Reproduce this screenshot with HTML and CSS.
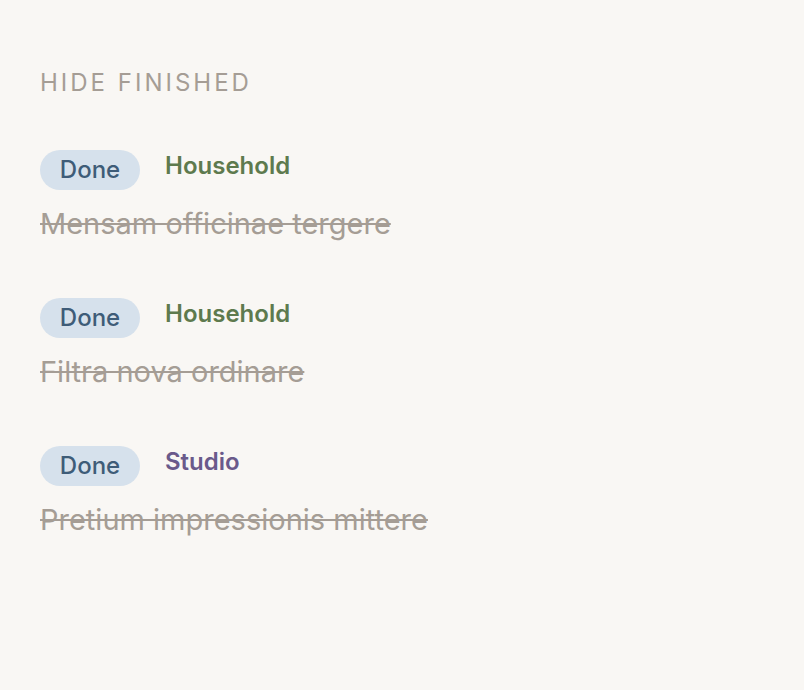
FILE: index.html
```html
<!DOCTYPE html>
<html lang="en">
<head>
    <meta charset="UTF-8">
    <meta name="viewport" content="width=device-width, initial-scale=1.0">
    <title>Finished tasks</title>
    <link rel="stylesheet" href="styles.css">
</head>
<body>
    <div class="list">
        <div class="list-title">Hide finished</div>
        <div class="task">
            <div class="task-meta">
                <span class="status">Done</span>
                <span class="tag household">Household</span>
            </div>
            <div class="task-name">Mensam officinae tergere</div>
        </div>
        <div class="task">
            <div class="task-meta">
                <span class="status">Done</span>
                <span class="tag household">Household</span>
            </div>
            <div class="task-name">Filtra nova ordinare</div>
        </div>
        <div class="task">
            <div class="task-meta">
                <span class="status">Done</span>
                <span class="tag studio">Studio</span>
            </div>
            <div class="task-name">Pretium impressionis mittere</div>
        </div>
    </div>
</body>
</html>
```

FILE: styles.css
```css
body {
    margin: 0;
    background-color: #f9f7f4;
    font-family: 'Inter', 'Noto Sans', sans-serif;
}

.list {
    padding: 68px 40px 40px;
}

.list-title {
    color: #a59d95;
    font-size: 24px;
    letter-spacing: 3px;
    text-transform: uppercase;
    line-height: 30px;
    margin-bottom: 52px;
}

.task {
    margin-bottom: 56px;
}

.task-meta {
    display: flex;
    align-items: flex-start;
    gap: 25px;
}

.status {
    display: inline-block;
    width: 100px;
    height: 40px;
    line-height: 40px;
    border-radius: 20px;
    background-color: #d6e1ec;
    color: #3e5c78;
    font-size: 24px;
    font-weight: 500;
    text-align: center;
}

.tag {
    font-size: 24px;
    font-weight: 600;
    line-height: 31px;
}

.tag.household {
    color: #5e7a4e;
}

.tag.studio {
    color: #6a5a8b;
}

.task-name {
    margin-top: 16px;
    color: #a59d95;
    font-size: 29px;
    line-height: 36px;
    text-decoration: line-through;
}
```
